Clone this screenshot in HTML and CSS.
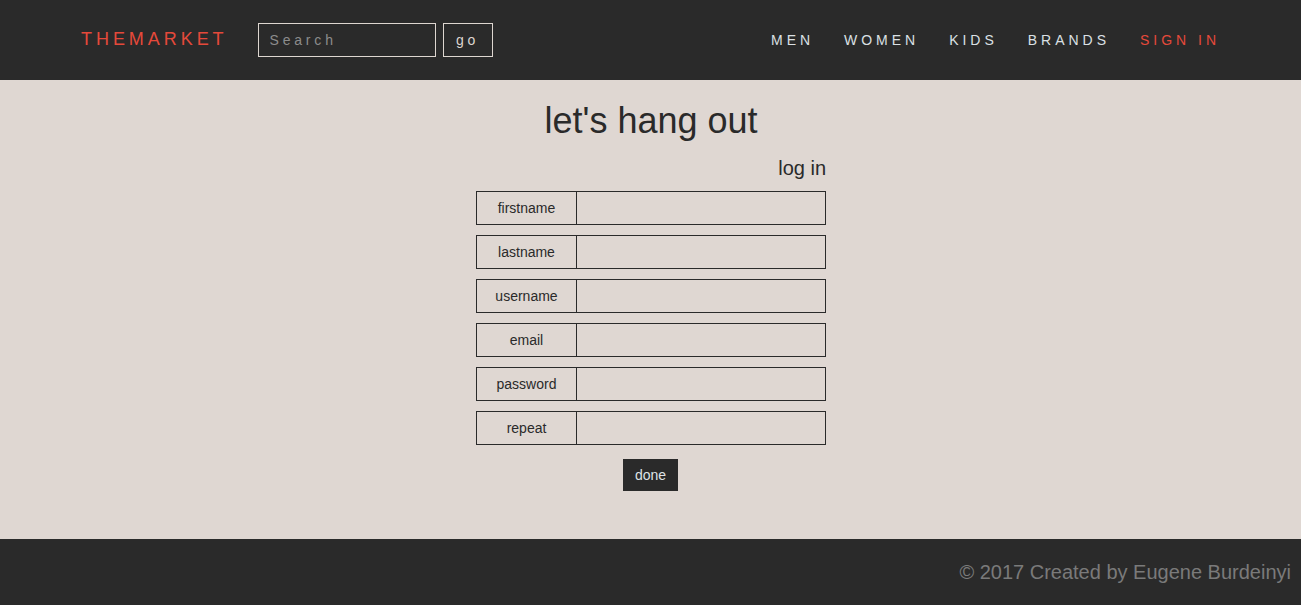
FILE: index.html
```html
<!DOCTYPE html>
<html>
<head>
<meta charset="utf-8">
<link rel="stylesheet" href="styles.css">
</head>
<body>
<header class="header">
  <div class="header-left">
    <a class="logo">THEMARKET</a>
    <form class="search">
      <input class="search-input" type="text" placeholder="Search">
      <button class="search-btn" type="button">go</button>
    </form>
  </div>
  <nav class="nav">
    <a class="nav-link">MEN</a>
    <a class="nav-link">WOMEN</a>
    <a class="nav-link">KIDS</a>
    <a class="nav-link">BRANDS</a>
    <a class="nav-link nav-signin">SIGN IN</a>
  </nav>
</header>
<main class="main">
  <h1 class="title">let's hang out</h1>
  <div class="form-wrap">
    <div class="login">log in</div>
    <div class="row"><span class="label">firstname</span><input class="field" type="text"></div>
    <div class="row"><span class="label">lastname</span><input class="field" type="text"></div>
    <div class="row"><span class="label">username</span><input class="field" type="text"></div>
    <div class="row"><span class="label">email</span><input class="field" type="text"></div>
    <div class="row"><span class="label">password</span><input class="field" type="password"></div>
    <div class="row"><span class="label">repeat</span><input class="field" type="password"></div>
    <div class="actions"><button class="done" type="button">done</button></div>
  </div>
</main>
<footer class="footer">© 2017 Created by Eugene Burdeinyi</footer>
</body>
</html>
```
FILE: styles.css
```css
* { box-sizing: border-box; }
html, body { margin: 0; padding: 0; }
body {
  font-family: "Liberation Sans", Arial, sans-serif;
  background: #dfd7d2;
  color: #2a2a2a;
}
.header {
  height: 80px;
  background: #2a2a2a;
  display: flex;
  align-items: center;
  justify-content: space-between;
  padding: 0 81px 0 81px;
}
.header-left { display: flex; align-items: center; }
.logo {
  color: #e5493a;
  font-size: 18px;
  letter-spacing: 3.95px;
  margin-right: 30px;
  margin-top: -2px;
}
.search { display: flex; gap: 7px; margin: 0; }
.search-input {
  width: 178px;
  height: 34px;
  background: transparent;
  border: 1px solid #ddd6d0;
  color: #ddd;
  font-family: "Liberation Sans", Arial, sans-serif;
  font-size: 14px;
  letter-spacing: 3.8px;
  padding: 0 11px;
  outline: none;
}
.search-input::placeholder { color: #8c8c8c; }
.search-btn {
  width: 50px;
  height: 34px;
  background: transparent;
  border: 1px solid #ddd6d0;
  color: #ddd6d0;
  font-family: "Liberation Sans", Arial, sans-serif;
  font-size: 14px;
  letter-spacing: 3.8px;
  padding: 0;
}
.nav { display: flex; gap: 0; margin-top: -1px; }
.nav-link {
  color: #dbe0e4;
  font-size: 14px;
  letter-spacing: 3.98px;
  margin-left: 30px;
}
.nav-signin { color: #e5493a; }
.main {
  height: 459px;
  display: flex;
  flex-direction: column;
  align-items: center;
  padding-top: 20px;
  padding-left: 1px;
}
.title {
  margin: 0;
  font-size: 36px;
  font-weight: normal;
  line-height: 42px;
  color: #2a2a2a;
}
.form-wrap { width: 350px; margin-top: 15px; }
.login {
  text-align: right;
  font-size: 20px;
  line-height: 23px;
  margin-bottom: 11px;
}
.row {
  display: flex;
  height: 34px;
  border: 1px solid #2a2a2a;
  margin-bottom: 10px;
}
.label {
  width: 100px;
  border-right: 1px solid #2a2a2a;
  display: flex;
  align-items: center;
  justify-content: center;
  font-size: 14px;
}
.field {
  flex: 1;
  border: none;
  background: transparent;
  outline: none;
  font-size: 14px;
  padding: 0 8px;
}
.actions { display: flex; justify-content: center; padding-top: 4px; padding-right: 1px; }
.done {
  width: 55px;
  height: 32px;
  background: #2a2a2a;
  color: #dfe3e6;
  border: none;
  font-family: "Liberation Sans", Arial, sans-serif;
  font-size: 14px;
  padding: 0;
}
.footer {
  height: 66px;
  background: #2a2a2a;
  color: #7a7a7a;
  font-size: 20px;
  display: flex;
  align-items: center;
  justify-content: flex-end;
  padding-right: 10px;
  padding-top: 1px;
}
```
